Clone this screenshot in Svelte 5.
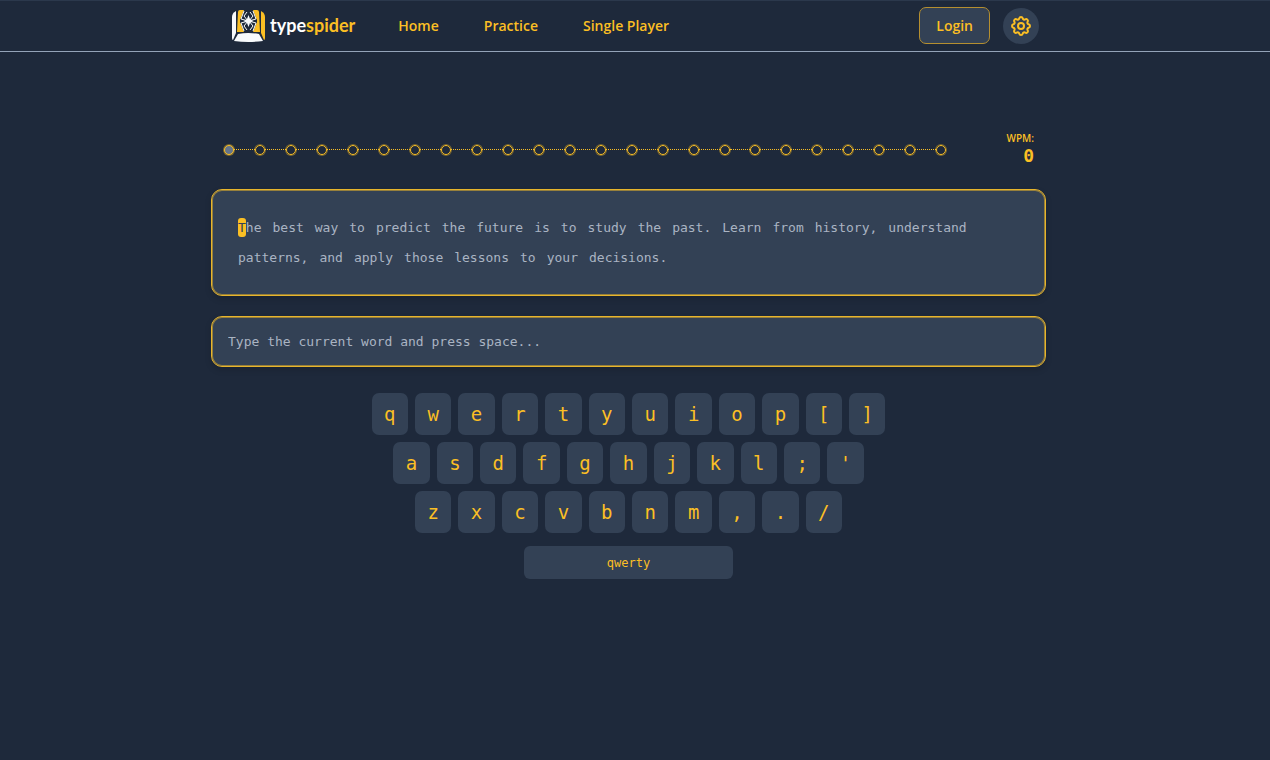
<script lang="ts">
  const links = ['Home', 'Practice', 'Single Player'];
  const rows = ['qwertyuiop[]', "asdfghjkl;'", 'zxcvbnm,./'];
  const quote =
    'The best way to predict the future is to study the past. Learn from history, understand patterns, and apply those lessons to your decisions.';

  const words = quote.split(' ');

  let typed = $state('');
  let done = $state(0);
  let wpm = $state(0);

  function onInput() {
    if (typed.endsWith(' ')) {
      if (typed.trim() === words[done]) {
        done += 1;
      }
      typed = '';
    }
  }
</script>

<header>
  <div class="bar">
    <a class="logo" href="#home">
      <svg width="34" height="34" viewBox="0 0 34 34" aria-hidden="true">
        <path d="M5 2 Q1 4 1 8 V29 Q1 31 2 31 L5 24 Z" fill="#f8fafc" />
        <path d="M30 2 Q34 4 34 8 V29 Q34 31 33 31 L30 24 Z" fill="#fbbf24" />
        <path d="M9 1 H15 V23 H6 L7 3 Q7 1 9 1 Z M20 1 H26 Q28 1 28 3 L29 23 H20 Z" fill="#fbbf24" />
        <path d="M13 1 H22 L26 11 V13 L22 23 H13 L9 13 V11 Z" fill="#1e293b" />
        <path d="M7 25 Q17 23 28 25 L32 32 Q17 34 3 32 Z" fill="#f8fafc" />
        <g fill="none" stroke="#f8fafc" stroke-width="1">
          <path d="M13 2 L10 10 L17 12 L10 14 L13 22" />
          <path d="M22 2 L25 10 L18 12 L25 14 L22 22" />
          <path d="M16 3 L13 7 L17 12 L13 17 L16 21" />
          <path d="M19 3 L22 7 L18 12 L22 17 L19 21" />
        </g>
        <path d="M17.500 6 L19 10 L22 12 L19 14 L17.500 18 L16 14 L13 12 L16 10 Z" fill="#f8fafc" />
      </svg>
      <span class="name">type<b>spider</b></span>
    </a>
    <nav>
      {#each links as link}
        <a href="#{link.toLowerCase().replace(' ', '-')}">{link}</a>
      {/each}
    </nav>
    <div class="actions">
      <button class="login">Login</button>
      <button class="gear" aria-label="Settings">
        <svg width="24" height="24" viewBox="0 0 24 24" fill="none" stroke="currentColor" stroke-width="2" stroke-linecap="round" stroke-linejoin="round">
          <path d="M10.325 4.317c.426-1.756 2.924-1.756 3.35 0a1.724 1.724 0 0 0 2.573 1.066c1.543-.94 3.31.826 2.37 2.37a1.724 1.724 0 0 0 1.065 2.572c1.756.426 1.756 2.924 0 3.35a1.724 1.724 0 0 0-1.066 2.573c.94 1.543-.826 3.31-2.37 2.37a1.724 1.724 0 0 0-2.572 1.065c-.426 1.756-2.924 1.756-3.35 0a1.724 1.724 0 0 0-2.573-1.066c-1.543.94-3.31-.826-2.37-2.37a1.724 1.724 0 0 0-1.065-2.572c-1.756-.426-1.756-2.924 0-3.35a1.724 1.724 0 0 0 1.066-2.573c-.94-1.543.826-3.31 2.37-2.37.996.608 2.296.07 2.572-1.065z" />
          <circle cx="12" cy="12" r="3" />
        </svg>
      </button>
    </div>
  </div>
</header>

<main>
  <div class="status">
    <div class="track">
      {#each words as _, i}
        {#if i > 0}<span class="line"></span>{/if}
        <span class="dot" class:current={i === done}></span>
      {/each}
    </div>
    <div class="wpm">
      <span>WPM:</span>
      <strong>{wpm}</strong>
    </div>
  </div>

  <div class="quote">
    {#each words as word, i}
      <span class="word">
        {#if i === done}<mark>{word[0]}</mark>{word.slice(1)}{:else}{word}{/if}
      </span>
    {/each}
  </div>

  <input
    type="text"
    bind:value={typed}
    oninput={onInput}
    placeholder="Type the current word and press space..."
    aria-label="Current word"
  />

  <div class="keyboard">
    {#each rows as row}
      <div class="row">
        {#each row as key}
          <button class="key">{key}</button>
        {/each}
      </div>
    {/each}
    <button class="space">qwerty</button>
  </div>
</main>

<style>
  :global(body) {
    margin: 0;
    background: #1e293b;
  }
  header, main {
    --yellow: #fbbf24;
    --slate: #334155;
    --mono: "DejaVu Sans Mono", monospace;
    color: var(--yellow);
    font-family: "Open Sans", "Noto Sans", sans-serif;
  }
  header {
    border-top: 1px solid #2b384c;
    border-bottom: 1px solid #94a3b8;
    background: #1e293b;
  }
  button {
    font: inherit;
    color: inherit;
    background: var(--slate);
    border: none;
    padding: 0;
    cursor: pointer;
  }
  .bar {
    display: flex;
    align-items: center;
    max-width: 808px;
    height: 49px;
    margin: 0 auto;
    padding-bottom: 1px;
  }
  .logo {
    display: flex;
    align-items: center;
    gap: 5px;
    color: #fff;
    text-decoration: none;
  }
  .name {
    padding-bottom: 2px;
    font-family: Lato, sans-serif;
    font-size: 18px;
    font-weight: 700;
    line-height: 24px;
  }
  .name b {
    color: var(--yellow);
    font-weight: 700;
  }
  nav {
    display: flex;
    gap: 45px;
    margin-left: 43px;
  }
  nav a {
    color: inherit;
    font-size: 14px;
    font-weight: 600;
    line-height: 22px;
    text-decoration: none;
  }
  .actions {
    display: flex;
    align-items: center;
    gap: 13px;
    margin-left: auto;
  }
  .login {
    padding: 7px 16px;
    border: 1px solid #b58f30;
    border-radius: 7px;
    font-size: 14px;
    font-weight: 600;
    line-height: 21px;
  }
  .gear {
    display: grid;
    place-items: center;
    width: 36px;
    height: 36px;
    border-radius: 50%;
  }
  main {
    max-width: 835px;
    margin: 0 auto;
    padding: 78px 13px 40px 0;
  }
  .status {
    display: flex;
    align-items: center;
    justify-content: space-between;
    gap: 60px;
    padding: 0 12px 0 13px;
  }
  .track {
    display: flex;
    flex: 1;
    align-items: center;
    padding-top: 3px;
  }
  .dot {
    box-sizing: border-box;
    width: 10px;
    height: 10px;
    border: 1px solid var(--yellow);
    border-radius: 50%;
    box-shadow: 0 0 0 1px rgba(251, 191, 36, 0.4);
  }
  .dot.current {
    background: #64748b;
  }
  .line {
    flex: 1;
    border-top: 1px dotted var(--yellow);
  }
  .wpm {
    display: flex;
    flex-direction: column;
    align-items: flex-end;
    font-size: 10px;
    font-weight: 600;
    line-height: 16px;
  }
  .wpm strong {
    font-family: var(--mono);
    font-size: 18px;
    line-height: 20px;
  }
  .quote, input {
    box-sizing: border-box;
    width: 100%;
    border: 1px solid #e8b52c;
    border-radius: 11px;
    background: var(--slate);
    font-family: var(--mono);
    font-size: 13px;
    box-shadow: inset 0 0 0 1px rgba(251, 191, 36, 0.5), 0 3px 6px rgba(0, 0, 0, 0.15);
  }
  .quote {
    display: flex;
    flex-wrap: wrap;
    column-gap: 11px;
    margin-top: 23px;
    padding: 23px 26px 22px;
    color: #aab4c3;
    line-height: 30px;
  }
  mark {
    padding: 2px 0;
    border-radius: 3px;
    background: var(--yellow);
    color: var(--slate);
  }
  input {
    display: block;
    height: 51px;
    margin-top: 20px;
    padding: 0 16px;
    color: #cbd5e1;
    outline: none;
  }
  input::placeholder {
    color: #aab4c3;
    opacity: 1;
  }
  .keyboard {
    display: flex;
    flex-direction: column;
    align-items: center;
    gap: 7px;
    max-width: 514px;
    margin: 26px auto 0;
    font-family: var(--mono);
  }
  .row {
    display: flex;
    justify-content: center;
    gap: 7px;
    width: 100%;
  }
  .key {
    flex: 0 0 calc((100% - 77px) / 12);
    height: 42px;
    border-radius: 7px;
    font-size: 19px;
  }
  .space {
    width: 209px;
    height: 33px;
    margin-top: 6px;
    border-radius: 6px;
    font-size: 12px;
  }
</style>
